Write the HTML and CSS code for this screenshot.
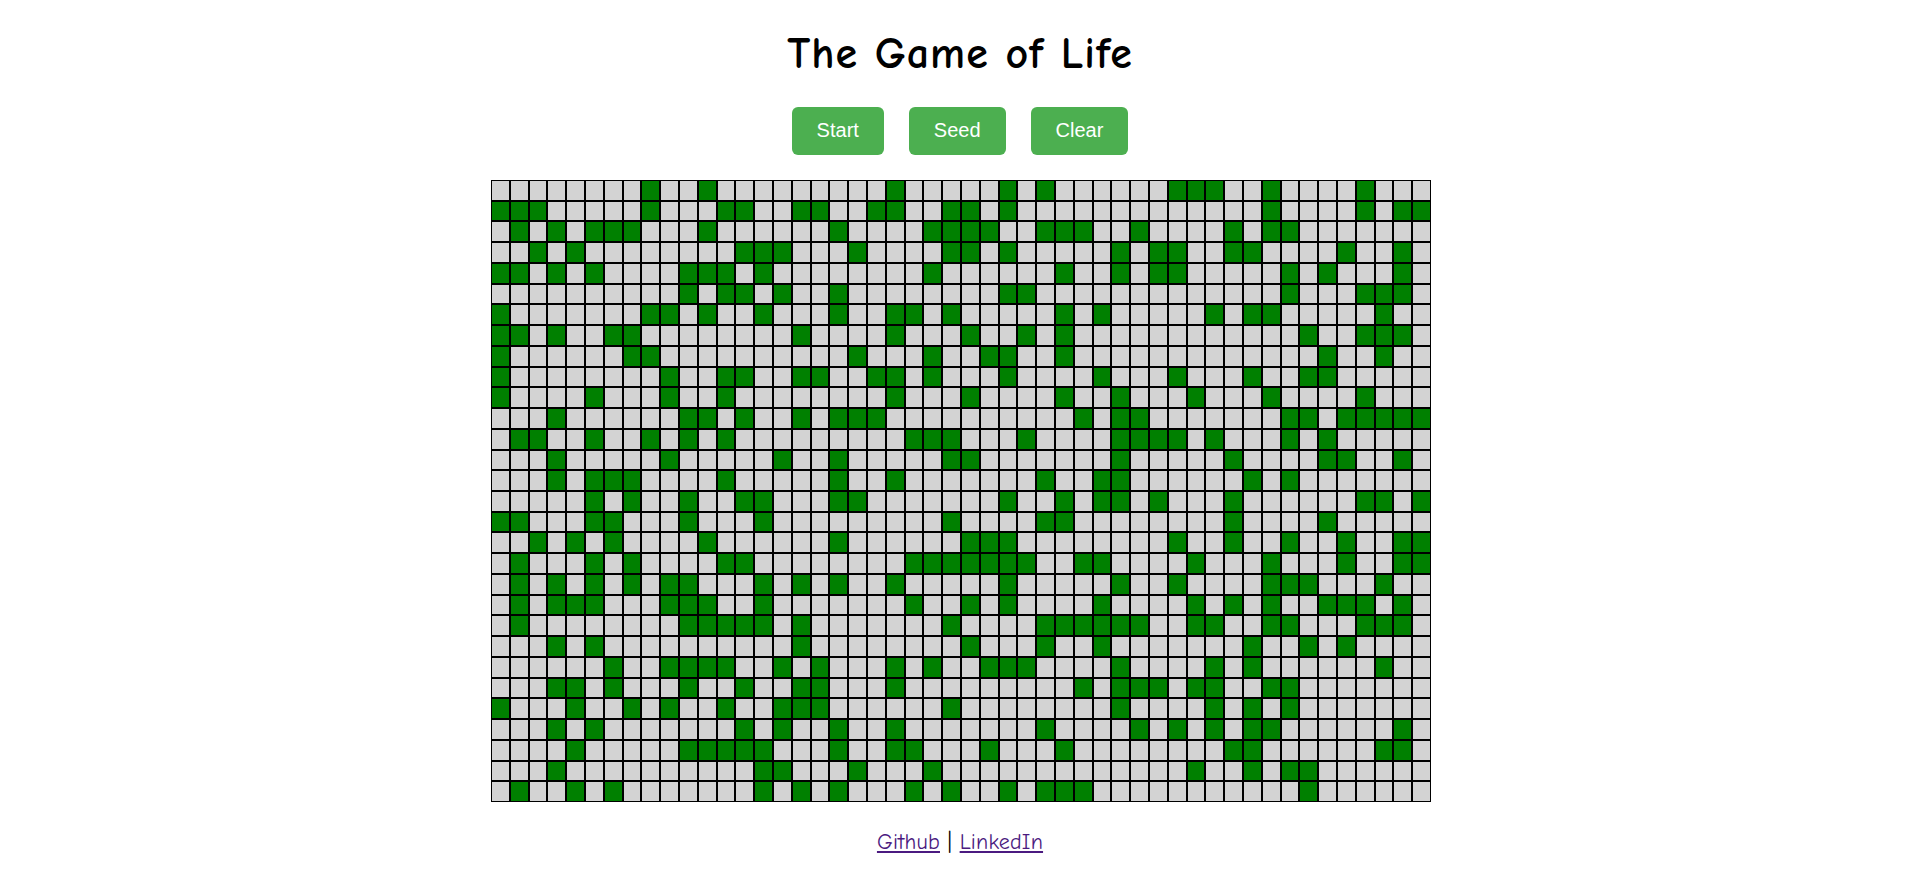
FILE: index.html
```html
<!DOCTYPE html>
<html lang="en">
<head>
<meta charset="utf-8">
<title>The Game of Life</title>
<link rel="stylesheet" href="styles.css">
</head>
<body>
<main class="page">
  <h1 class="title">The Game of Life</h1>
  <div class="controls">
    <button class="btn" type="button">Start</button>
    <button class="btn" type="button">Seed</button>
    <button class="btn" type="button">Clear</button>
  </div>
  <div class="board" id="board"></div>
  <footer class="footer">
    <a class="footer-link" href="#github">Github</a> | <a class="footer-link" href="#linkedin">LinkedIn</a>
  </footer>
</main>
<script src="script.js"></script>
</body>
</html>
```
FILE: styles.css
```css
* { box-sizing: border-box; }
html, body { margin: 0; padding: 0; background: #fff; }
body { font-family: "Comic Sans MS", "Comic Neue", cursive; color: #000; overflow: hidden; }
.page { display: flex; flex-direction: column; align-items: center; padding-left: 3px; }
.title { margin: 27px 0 0; font-size: 44px; line-height: 54px; font-weight: 700; letter-spacing: 1px; height: 54px; }
.controls { display: flex; gap: 25px; margin-top: 26px; }
.btn {
  font-family: "Liberation Sans", Arial, sans-serif;
  font-size: 20px;
  line-height: 24px;
  height: 48px;
  padding: 0 25px 2px;
  color: #fff;
  background: #4caf50;
  border: 0;
  border-radius: 6px;
}
.board {
  display: grid;
  width: 940px;
  height: 622px;
  margin-top: 25px;
  margin-left: 2px;
  grid-template-columns: repeat(50, 1fr);
  grid-template-rows: repeat(30, 1fr);
}
.cell { border: 1px solid #000; background: #d3d3d3; }
.cell-alive { background: #008000; }
.footer { margin-top: 26px; font-size: 22px; line-height: 28px; letter-spacing: 0.2px; }
.footer-link { color: #4b1a80; }
```
FILE: script.js
```js
var ALIVE = [
  [8,11,21,27,29,36,37,38,41,46],
  [0,1,2,8,12,13,16,17,20,21,24,25,27,41,46,48,49],
  [1,3,5,6,7,11,18,23,24,25,26,29,30,31,34,39,41,42],
  [2,4,13,14,15,19,24,25,27,33,35,36,39,40,45,48],
  [0,1,3,5,10,11,12,14,23,30,33,35,36,42,44,48],
  [10,12,13,15,18,27,28,42,46,47,48],
  [0,8,9,11,14,18,21,22,24,30,32,38,40,41,47],
  [0,1,3,6,7,16,21,25,28,30,43,46,47,48],
  [0,7,8,19,23,26,27,30,44,47],
  [0,9,12,13,16,17,20,21,23,27,32,36,40,43,44],
  [0,5,9,12,21,25,30,33,37,41,46],
  [3,10,11,13,16,18,19,20,31,33,34,42,43,45,46,47,48,49],
  [1,2,5,8,10,12,22,23,24,28,33,34,35,36,38,42,44],
  [3,9,15,18,24,25,33,39,44,45,48],
  [3,5,6,7,12,18,21,29,32,33,40,42],
  [5,7,10,13,14,18,19,27,30,32,33,35,39,46,47,49],
  [0,1,5,6,10,14,24,29,30,39,44],
  [2,4,6,11,18,25,26,27,36,39,42,45,48,49],
  [1,5,7,12,13,22,23,24,25,26,27,28,31,32,37,41,45,48,49],
  [1,3,5,7,9,10,14,16,18,21,27,33,36,41,42,43,47],
  [1,3,4,5,9,10,11,14,22,25,27,32,37,39,41,44,45,46,48],
  [1,10,11,12,13,14,16,24,29,30,31,32,33,34,37,38,41,42,46,47,48],
  [3,5,16,25,29,32,40,43,45],
  [6,9,10,11,12,15,17,21,23,26,27,28,33,38,40,47],
  [3,4,6,10,13,16,17,21,31,33,34,35,37,38,41,42],
  [0,4,7,9,12,15,16,17,24,33,38,40,42],
  [3,5,13,15,18,21,29,34,36,38,40,41,48],
  [4,10,11,12,13,14,18,21,22,26,30,39,40,47,48],
  [3,14,15,19,23,37,40,42,43],
  [1,4,6,14,16,18,22,24,27,29,30,31,43]
];
var board = document.getElementById('board');
ALIVE.forEach(function (row) {
  for (var col = 0; col < 50; col++) {
    var cell = document.createElement('div');
    cell.className = row.indexOf(col) >= 0 ? 'cell cell-alive' : 'cell';
    board.appendChild(cell);
  }
});
```
